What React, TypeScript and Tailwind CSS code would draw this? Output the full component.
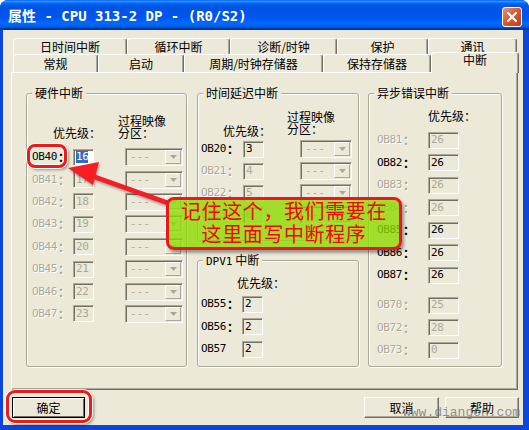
import React from 'react';

const MONO = "font-['DejaVu_Sans_Mono','Noto_Sans_CJK_SC',monospace]";
const CJK = "font-['Noto_Sans_CJK_SC',sans-serif]";
const GRAY = 'text-[#ACA899] [text-shadow:1px_1px_0_#fff]';

type Row = { ob: string; v: string; on?: boolean; sel?: boolean; noColon?: boolean };

function Label({ ob, on, noColon, w }: { ob: string; on?: boolean; noColon?: boolean; w: string }) {
  return (
    <div className={`flex items-center shrink-0 ${w} ${on ? 'text-black' : GRAY}`}>
      <span className={`${MONO} text-[11px] leading-[12px] tracking-[-0.4px]`}>{ob}</span>
      {!noColon && <span className={`${CJK} text-[12px] leading-[12px] font-bold ml-[1px]`}>：</span>}
    </div>
  );
}

function Field({ v, on, sel, w }: { v: string; on?: boolean; sel?: boolean; w: string }) {
  return (
    <div
      className={`${w} h-[17px] shrink-0 flex items-center pl-[2px] border border-t-[#ACA899] border-l-[#ACA899] border-b-white border-r-white shadow-[inset_1px_1px_0_#716F64] ${
        sel ? 'bg-white' : ''
      }`}
    >
      <span
        className={`${MONO} text-[11px] leading-[12px] tracking-[-0.4px] ${
          sel ? 'bg-[#316AC5] text-white' : on ? 'text-black' : 'text-[#ACA899]'
        }`}
      >
        {v}
      </span>
    </div>
  );
}

function Combo({ w, className = '' }: { w: string; className?: string }) {
  return (
    <div
      className={`${w} ${className} h-[18px] shrink-0 flex border border-t-[#ACA899] border-l-[#ACA899] border-b-white border-r-white shadow-[inset_1px_1px_0_#716F64]`}
    >
      <span className={`flex-1 pl-[4px] ${MONO} text-[11px] leading-[16px] text-[#ACA899]`}>---</span>
      <div className="w-[16px] h-[14px] mt-[1px] mr-[1px] flex items-center justify-center border border-t-white border-l-white border-b-[#ACA899] border-r-[#ACA899] bg-[#ECE9D8]">
        <svg width="7" height="4" viewBox="0 0 7 4">
          <path d="M0 0h7L3.5 4z" fill="#ACA899" />
        </svg>
      </div>
    </div>
  );
}

function Group({ title, className, children }: { title: React.ReactNode; className: string; children: React.ReactNode }) {
  return (
    <div
      className={`relative border border-[#ACA899] rounded-[3px] shadow-[inset_1px_1px_0_#fff,1px_1px_0_#fff] ${className}`}
    >
      <span className={`absolute top-[-7px] left-[5px] px-[3px] bg-[#ECE9D8] ${CJK} text-[12px] leading-[12px] whitespace-nowrap`}>
        {title}
      </span>
      {children}
    </div>
  );
}

function Tab({ label, w, h }: { label: string; w: string; h: string }) {
  return (
    <div
      className={`${w} ${h} shrink-0 flex items-center justify-center border-t border-l border-r border-t-white border-l-white border-r-[#716F64] shadow-[inset_-1px_0_0_#ACA899] rounded-t-[3px] ${CJK} text-[12px] leading-[12px]`}
    >
      {label}
    </div>
  );
}

const hw: Row[] = [
  { ob: 'OB40', v: '16', on: true, sel: true },
  { ob: 'OB41', v: '17' },
  { ob: 'OB42', v: '18' },
  { ob: 'OB43', v: '19' },
  { ob: 'OB44', v: '20' },
  { ob: 'OB45', v: '21' },
  { ob: 'OB46', v: '22' },
  { ob: 'OB47', v: '23' },
];

const delay: Row[] = [
  { ob: 'OB20', v: '3', on: true },
  { ob: 'OB21', v: '4' },
  { ob: 'OB22', v: '5' },
  { ob: 'OB23', v: '6' },
];

const dpv1: Row[] = [
  { ob: 'OB55', v: '2', on: true },
  { ob: 'OB56', v: '2', on: true },
  { ob: 'OB57', v: '2', on: true, noColon: true },
];

const async1: Row[] = [
  { ob: 'OB81', v: '26' },
  { ob: 'OB82', v: '26', on: true },
  { ob: 'OB83', v: '26' },
  { ob: 'OB84', v: '26' },
  { ob: 'OB85', v: '26', on: true },
  { ob: 'OB86', v: '26', on: true },
  { ob: 'OB87', v: '26', on: true },
];

const async2: Row[] = [
  { ob: 'OB70', v: '25' },
  { ob: 'OB72', v: '28' },
  { ob: 'OB73', v: '0' },
];

export default function App() {
  return (
    <div className={`w-[529px] h-[430px] bg-white relative overflow-hidden ${CJK} text-[12px] text-black`}>
      <div className="w-full h-full flex flex-col rounded-t-[8px] bg-[#0A46DA] overflow-hidden">
        {/* Title bar */}
        <div className="h-[30px] shrink-0 flex items-center pl-[8px] pr-[7px] bg-[linear-gradient(180deg,#0058EE_0%,#3593FF_4%,#288EFF_6%,#127DFF_8%,#036FFC_10%,#0262EE_14%,#0057E5_20%,#0054E3_24%,#0055EB_56%,#005BF5_66%,#026AFE_76%,#0062EF_86%,#0052D6_92%,#0040AB_94%,#003092_100%)]">
          <span className="text-white font-bold text-[14px] leading-[16px] whitespace-nowrap">
            <span className={CJK}>属性</span>
            <span className={`${MONO} whitespace-pre`}> - CPU 313-2 DP - (R0/S2)</span>
          </span>
          <div className="ml-auto self-start mt-[7px] w-[20px] h-[20px] rounded-[3px] border border-white flex items-center justify-center bg-[linear-gradient(135deg,#E8957A_0%,#DA5A34_45%,#C4391A_100%)]">
            <svg width="10" height="10" viewBox="0 0 10 10">
              <path d="M1 1L9 9M9 1L1 9" stroke="#fff" strokeWidth="2.2" strokeLinecap="square" />
            </svg>
          </div>
        </div>

        {/* Body */}
        <div className="flex-1 ml-[3px] mr-[6px] mb-[5px] bg-[#ECE9D8] flex flex-col pt-[8px]">
          {/* Tabs */}
          <div className="flex ml-[10px] h-[16px]">
            <Tab label="日时间中断" w="w-[114px]" h="h-[16px]" />
            <Tab label="循环中断" w="w-[103px]" h="h-[16px]" />
            <Tab label="诊断/时钟" w="w-[107px]" h="h-[16px]" />
            <Tab label="保护" w="w-[91px]" h="h-[16px]" />
            <Tab label="通讯" w="w-[89px]" h="h-[16px]" />
          </div>
          <div className="flex items-end ml-[10px] h-[18px] relative z-10">
            <Tab label="常规" w="w-[85px]" h="h-[18px]" />
            <Tab label="启动" w="w-[86px]" h="h-[18px]" />
            <Tab label="周期/时钟存储器" w="w-[139px]" h="h-[18px]" />
            <Tab label="保持存储器" w="w-[108px]" h="h-[18px]" />
            <div className="w-[88px] h-[21px] -mb-px shrink-0 flex justify-center pt-[1px] bg-[#ECE9D8] border-t border-l border-r border-t-white border-l-white border-r-[#716F64] shadow-[inset_-1px_0_0_#ACA899] rounded-t-[3px] text-[12px] leading-[12px]">
              中断
            </div>
          </div>

          {/* Panel */}
          <div className="ml-[8px] w-[507px] h-[318px] shrink-0 border border-t-white border-l-white border-b-[#716F64] border-r-[#716F64] shadow-[inset_-1px_-1px_0_#ACA899] pl-[14px] pt-[20px] flex items-start">
            {/* Hardware interrupts */}
            <Group title="硬件中断" className="w-[161px] h-[274px]">
              <div className="flex items-end pt-[21px] leading-[12px]">
                <span className="ml-[26px]">优先级：</span>
                <span className="ml-[17px] flex flex-col">
                  <span>过程映像</span>
                  <span>分区：</span>
                </span>
              </div>
              <div className="mt-[7px] flex flex-col">
                {hw.map((r) => (
                  <div key={r.ob} className="h-[22.4px] flex items-center pl-[5px]">
                    <Label ob={r.ob} on={r.on} w="w-[41px]" />
                    <Field v={r.v} on={r.on} sel={r.sel} w="w-[21px]" />
                    <Combo w="w-[58px]" className="ml-[31px]" />
                  </div>
                ))}
              </div>
            </Group>

            {/* Middle column */}
            <div className="ml-[10px] flex flex-col">
              <Group title="时间延迟中断" className="w-[162px] h-[148px]">
                <div className="flex items-end pt-[17px] leading-[12px]">
                  <span className="ml-[25px] -mb-[2px]">优先级：</span>
                  <span className="ml-[16px] flex flex-col">
                    <span>过程映像</span>
                    <span>分区：</span>
                  </span>
                </div>
                <div className="mt-[3px] flex flex-col">
                  {delay.map((r) => (
                    <div key={r.ob} className="h-[22px] flex items-center pl-[3px]">
                      <Label ob={r.ob} on={r.on} w="w-[42px]" />
                      <Field v={r.v} on={r.on} w="w-[21px]" />
                      <Combo w="w-[52px]" className="ml-[36px]" />
                    </div>
                  ))}
                </div>
              </Group>
              <Group
                title={
                  <>
                    <span className={`${MONO} text-[11px]`}>DPV1</span> 中断
                  </>
                }
                className="w-[162px] h-[107px] mt-[19px]"
              >
                <div className="pt-[16px] leading-[12px]">
                  <span className="ml-[39px]">优先级：</span>
                </div>
                <div className="mt-[4px] flex flex-col">
                  {dpv1.map((r) => (
                    <div key={r.ob} className="h-[22.5px] flex items-center pl-[3px]">
                      <Label ob={r.ob} on={r.on} noColon={r.noColon} w="w-[41px]" />
                      <Field v={r.v} on={r.on} w="w-[21px]" />
                    </div>
                  ))}
                </div>
              </Group>
            </div>

            {/* Async errors */}
            <Group title="异步错误中断" className="w-[134px] h-[274px] ml-[9px]">
              <div className="pt-[16px] leading-[12px]">
                <span className="ml-[59px]">优先级：</span>
              </div>
              <div className="mt-[7px] flex flex-col">
                {async1.map((r) => (
                  <div key={r.ob} className="h-[22.5px] flex items-center pl-[8px]">
                    <Label ob={r.ob} on={r.on} w="w-[51px]" />
                    <Field v={r.v} on={r.on} w="w-[31px]" />
                  </div>
                ))}
              </div>
              <div className="mt-[7.5px] flex flex-col">
                {async2.map((r) => (
                  <div key={r.ob} className="h-[22.5px] flex items-center pl-[8px]">
                    <Label ob={r.ob} on={r.on} w="w-[51px]" />
                    <Field v={r.v} on={r.on} w="w-[31px]" />
                  </div>
                ))}
              </div>
            </Group>
          </div>

          {/* Buttons */}
          <div className="mt-[7px] h-[21px] flex">
            <div className="ml-[9px] w-[73px] h-[21px] flex items-center justify-center border border-black shadow-[inset_1px_1px_0_#fff,inset_-1px_-1px_0_#716F64]">
              确定
            </div>
            <div className="ml-auto w-[75px] h-[21px] flex items-center justify-center border border-t-white border-l-white border-b-[#716F64] border-r-[#716F64] shadow-[inset_-1px_-1px_0_#ACA899]">
              取消
            </div>
            <div className="ml-[6px] mr-[4px] w-[74px] h-[21px] flex items-center justify-center border border-t-white border-l-white border-b-[#716F64] border-r-[#716F64] shadow-[inset_-1px_-1px_0_#ACA899]">
              帮助
            </div>
          </div>
        </div>
      </div>

      {/* Annotations */}
      <div className="absolute left-[27px] top-[144px] w-[40px] h-[24px] rounded-[8px] border-[3px] border-[#F01818] shadow-[0_0_0_1px_#fff,inset_0_0_0_1px_#fff,2px_2px_3px_rgba(0,0,0,0.35)]" />
      <div className="absolute left-[6px] top-[390px] w-[86px] h-[33px] rounded-[9px] border-[3px] border-[#F01818] shadow-[0_0_0_1px_#fff,inset_0_0_0_1px_#fff,2px_2px_3px_rgba(0,0,0,0.35)]" />

      <svg className="absolute left-0 top-0 pointer-events-none" width="529" height="430" viewBox="0 0 529 430">
        <g style={{ filter: 'drop-shadow(1px 2px 1px rgba(0,0,0,0.3))' }}>
          <line x1="92" y1="176" x2="168" y2="203" stroke="#F51E24" strokeWidth="5" />
          <polygon points="68,168 99,162 93,185" fill="#F51E24" />
        </g>
      </svg>

      <div className="absolute left-[166px] top-[197px] w-[236px] h-[53px] rounded-[8px] border-[3px] border-[#EC1620] bg-[#8ddb00]/80 shadow-[2px_3px_3px_rgba(0,0,0,0.35)] flex flex-col items-center justify-center pb-[4px]">
        <span className="text-[20px] leading-[23px] tracking-[0.6px] text-[#FF0000] whitespace-nowrap">记住这个，我们需要在</span>
        <span className="text-[20px] leading-[23px] tracking-[0.6px] text-[#FF0000] whitespace-nowrap">这里面写中断程序</span>
      </div>

      <span className="absolute left-[403px] top-[405px] font-['Liberation_Mono',monospace] text-[13px] leading-[16px] text-[#6e6e6e]/75 whitespace-nowrap">
        www.diangon.com
      </span>
    </div>
  );
}
